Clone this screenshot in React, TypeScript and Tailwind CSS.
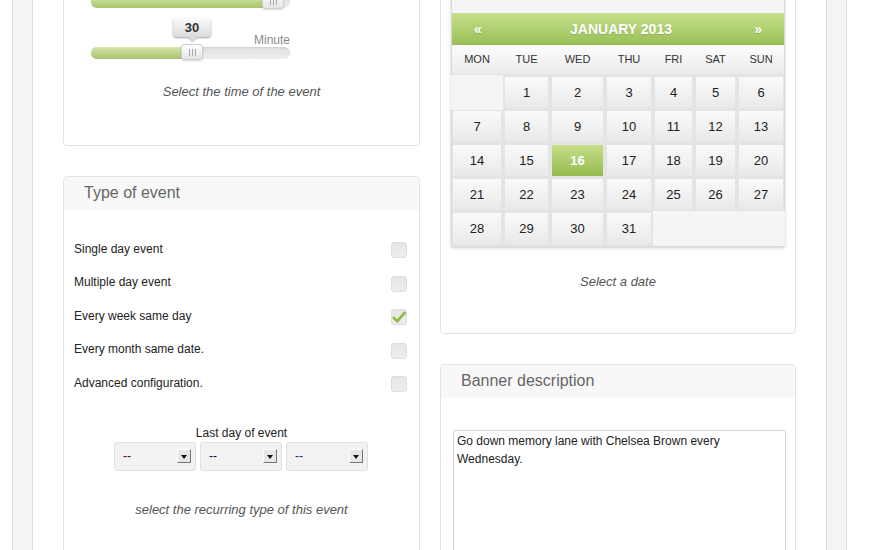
import React from 'react';

const weeks: (number | null)[][] = [
  [null, 1, 2, 3, 4, 5, 6],
  [7, 8, 9, 10, 11, 12, 13],
  [14, 15, 16, 17, 18, 19, 20],
  [21, 22, 23, 24, 25, 26, 27],
  [28, 29, 30, 31, null, null, null],
];

const dayNames = ['MON', 'TUE', 'WED', 'THU', 'FRI', 'SAT', 'SUN'];

const eventTypes = [
  { label: 'Single day event', checked: false },
  { label: 'Multiple day event', checked: false },
  { label: 'Every week same day', checked: true },
  { label: 'Every month same date.', checked: false },
  { label: 'Advanced configuration.', checked: false },
];

const Slider: React.FC<{ pos: number; tip?: string }> = ({ pos, tip }) => (
  <div className="relative h-[16px] w-[199px]">
    <div className="absolute left-0 right-0 top-[3px] h-[12px] overflow-hidden rounded-full bg-gradient-to-b from-[#e0e0e0] to-[#eeeeee] shadow-[inset_0_1px_2px_rgba(0,0,0,0.08)]">
      <div className="h-full bg-gradient-to-b from-[#d5e6ab] to-[#a7c46b]" style={{ width: pos + 8 }} />
    </div>
    <div
      className="absolute top-0 flex h-[16px] w-[22px] items-center justify-center gap-[2px] rounded-[3px] border border-[#cfcfcf] bg-gradient-to-b from-[#ffffff] to-[#e4e4e4] shadow-[0_1px_2px_rgba(0,0,0,0.15)]"
      style={{ left: pos }}
    >
      <span className="h-[7px] w-px bg-[#a8a8a8]" />
      <span className="h-[7px] w-px bg-[#a8a8a8]" />
      <span className="h-[7px] w-px bg-[#a8a8a8]" />
      {tip && (
        <div className="absolute bottom-[22px] left-1/2 flex h-[19px] w-[37px] -translate-x-1/2 items-center justify-center rounded-[4px] bg-gradient-to-b from-[#fbfbfb] to-[#dcdcdc] text-[13px] font-bold text-[#333] shadow-[0_1px_2px_rgba(0,0,0,0.35)]">
          {tip}
          <span className="absolute -bottom-[3px] left-1/2 h-[6px] w-[6px] -translate-x-1/2 rotate-45 bg-[#dcdcdc] shadow-[1px_1px_1px_rgba(0,0,0,0.2)]" />
        </div>
      )}
    </div>
  </div>
);

const Checkbox: React.FC<{ checked: boolean }> = ({ checked }) => (
  <div className="mt-[3px] flex h-[16px] w-[16px] items-center justify-center rounded-[3px] border border-[#dddddd] bg-gradient-to-b from-[#e6e6e6] to-[#eeeeee]">
    {checked && (
      <svg width="14" height="12" viewBox="0 0 14 12">
        <path d="M1.5 6.5 L5 10 L12.5 1.5" fill="none" stroke="#3f6a8c" strokeWidth="2.2" strokeLinecap="round" strokeLinejoin="round" opacity="0.5" transform="translate(0.4 0.6)" />
        <path d="M1.5 6.5 L5 10 L12.5 1.5" fill="none" stroke="#8fc21f" strokeWidth="2" strokeLinecap="round" strokeLinejoin="round" />
      </svg>
    )}
  </div>
);

const SelectBox: React.FC<{ color: string }> = ({ color }) => (
  <div className="flex h-[29px] w-[82px] items-center justify-between rounded-[3px] border border-[#e0e0e0] bg-[#f2f2f2] pl-[8px] pr-[4px]">
    <span className={`text-[12px] ${color}`}>--</span>
    <div className="flex h-[14px] w-[14px] items-center justify-center border-b border-r border-l border-t border-b-[#777] border-l-[#fff] border-r-[#777] border-t-[#fff] bg-[#e6e6e6]">
      <span className="mt-[2px] h-0 w-0 border-l-[3px] border-r-[3px] border-t-[4px] border-l-transparent border-r-transparent border-t-[#111]" />
    </div>
  </div>
);

export default function App() {
  return (
    <div className="flex h-[550px] w-full overflow-hidden bg-white font-['Liberation_Sans',Arial,sans-serif] text-[#222]">
      <div className="w-[12px] shrink-0" />
      <div className="w-[21px] shrink-0 border-x border-[#dcdcdc] bg-[#f4f4f4]" />

      <main className="grid w-[793px] shrink-0 grid-cols-[357px_356px] items-start gap-x-[20px] px-[30px]">
        {/* left column */}
        <div className="flex flex-col">
          <section className="-mt-[40px] rounded-[4px] border border-[#e4e4e4] bg-white pb-[45px] pt-[32px]">
            <div className="pl-[27px]">
              <Slider pos={171} />
              <div className="mt-[24px] h-[14px] w-[199px] text-right text-[12px] leading-[14px] text-[#8a8a8a]">Minute</div>
              <div className="-mt-[3px]">
                <Slider pos={90} tip="30" />
              </div>
            </div>
            <p className="mt-[24px] text-center text-[13px] italic leading-[16px] text-[#555]">Select the time of the event</p>
          </section>

          <section className="mt-[30px] h-[420px] rounded-[4px] border border-[#e4e4e4] bg-white">
            <header className="flex h-[33px] items-center rounded-t-[4px] bg-[#f8f8f8] pb-[2px] pl-[20px] text-[16px] text-[#666]">
              Type of event
            </header>
            <div className="pl-[10px] pr-[12px] pt-[22px]">
              {eventTypes.map(t => (
                <div key={t.label} className="flex h-[33.5px] items-center justify-between text-[12px]">
                  <span>{t.label}</span>
                  <Checkbox checked={t.checked} />
                </div>
              ))}
            </div>
            <div className="mt-[26px] text-center text-[12px] leading-[14px]">Last day of event</div>
            <div className="mt-[2px] flex justify-center gap-[4px] pr-px">
              <SelectBox color="text-[#4a0808]" />
              <SelectBox color="text-[#08103a]" />
              <SelectBox color="text-[#142c6a]" />
            </div>
            <p className="mt-[31px] text-center text-[13px] italic leading-[16px] text-[#555]">select the recurring type of this event</p>
          </section>
        </div>

        {/* right column */}
        <div className="flex flex-col">
          <section className="-mt-[30px] rounded-[4px] border border-[#e4e4e4] bg-white pb-[43px] pt-[8px]">
            <div className="mx-[10px] border border-[#d9d9d9] bg-[#f5f5f5] shadow-[0_1px_3px_rgba(0,0,0,0.2)]">
              <div className="h-[33px]" />
              <div className="flex h-[32px] items-center justify-between bg-gradient-to-b from-[#c8e08b] to-[#98bf56] px-[22px] text-[14px] font-bold text-white [text-shadow:0_1px_1px_rgba(0,0,0,0.15)]">
                <span>«</span>
                <span className="pl-[6px]">JANUARY 2013</span>
                <span>»</span>
              </div>
              <div className="grid h-[29px] grid-cols-[48px_43px_51px_44px_37px_39px_44px] items-center gap-x-[4px] bg-gradient-to-b from-[#fdfdfd] to-[#ebebeb] px-[1px] text-center text-[11px] text-[#333]">
                {dayNames.map(d => (
                  <span key={d}>{d}</span>
                ))}
              </div>
              <div className="grid grid-cols-[48px_43px_51px_44px_37px_39px_44px] auto-rows-[31px] gap-x-[4px] gap-y-[3px] bg-[#e4e4e4] px-[1px] pb-[2px] pt-[3px] text-[13px]">
                {weeks.flat().map((d, i) =>
                  d === null ? (
                    <div key={i} className="-m-[2px] bg-[#f5f5f5]" />
                  ) : d === 16 ? (
                    <div key={i} className="flex items-center justify-center bg-gradient-to-b from-[#c6de88] to-[#95bc50] font-bold text-white">
                      {d}
                    </div>
                  ) : (
                    <div key={i} className="flex items-center justify-center bg-gradient-to-b from-[#fafafa] to-[#e9e9e9] text-[#222]">
                      {d}
                    </div>
                  )
                )}
              </div>
            </div>
            <p className="mt-[27px] text-center text-[13px] italic leading-[16px] text-[#555]">Select a date</p>
          </section>

          <section className="mt-[30px] h-[300px] rounded-[4px] border border-[#e4e4e4] bg-white">
            <header className="flex h-[33px] items-center rounded-t-[4px] bg-[#f8f8f8] pb-[2px] pl-[20px] text-[16px] text-[#666]">
              Banner description
            </header>
            <textarea
              readOnly
              defaultValue="Go down memory lane with Chelsea Brown every Wednesday."
              className="ml-[12px] mt-[32px] block h-[160px] w-[333px] resize-none rounded-[3px] border border-[#d4d4d4] bg-white px-[3px] pt-[1px] font-['Liberation_Sans',Arial,sans-serif] text-[12px] leading-[18px] text-[#222] outline-none"
            />
          </section>
        </div>
      </main>

      <div className="w-[21px] shrink-0 border-x border-[#dcdcdc] bg-[#f4f4f4]" />
      <div className="flex-1" />
    </div>
  );
}
